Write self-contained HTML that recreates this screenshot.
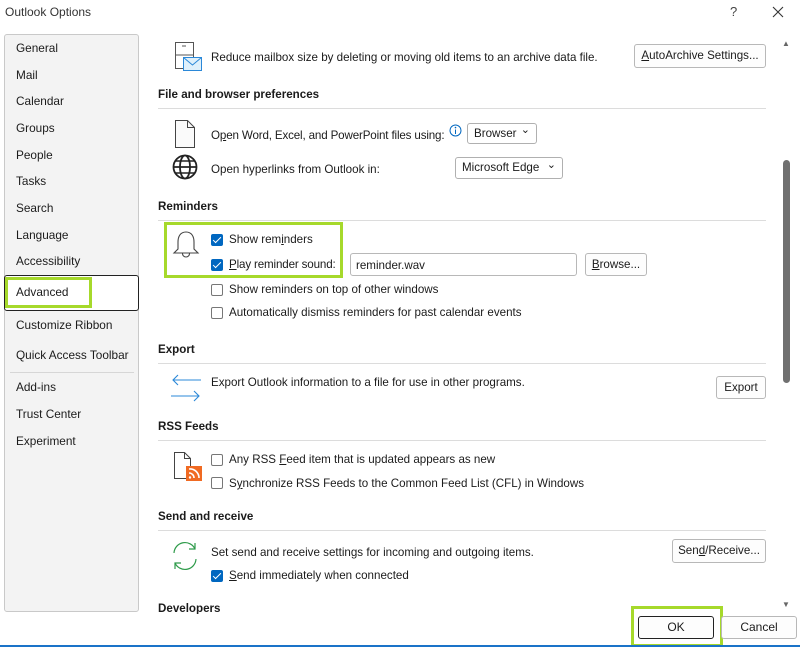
<!DOCTYPE html>
<html><head><meta charset="utf-8"><style>
*{margin:0;padding:0;box-sizing:border-box}
body{width:800px;height:647px;background:#fff;font-family:"Liberation Sans",sans-serif;font-size:11.6px;color:#1b1b1b;position:relative;overflow:hidden}
.a{position:absolute;white-space:nowrap}
div.a{margin-top:2px}
.h{font-weight:bold;font-size:11.6px}
.line{position:absolute;left:158px;width:608px;height:1px;background:#dcdcdc}
.nav{position:absolute;left:16px;font-size:11.8px}
.btn{position:absolute;border:1px solid #b8b8b8;border-radius:3px;background:#fdfdfd;text-align:center;font-size:11.6px}
.cb{position:absolute;width:12px;height:12px;border:1px solid #777;border-radius:2px;background:#fff;margin-top:2px}
.cb.on{background:#0067c0;border-color:#0067c0}
.cb.on::after{content:"";position:absolute;left:3px;top:0px;width:3px;height:7px;border:solid #fff;border-width:0 1.5px 1.5px 0;transform:rotate(45deg)}
.sel{position:absolute;border:1px solid #b0b0b0;border-radius:3px;background:#fff;font-size:11.6px;padding-left:6px}
.sel::after{content:"⌄";position:absolute;right:6px;top:-3px;font-size:11px}
.green{position:absolute;border:3px solid #a6d92b}
</style></head><body>
<div class="a" style="left:5px;top:5px;font-size:12px;color:#333;margin-top:0">Outlook Options</div>
<div class="a" style="left:730px;top:4px;font-size:13px;color:#444;margin-top:0">?</div>
<svg class="a" style="left:772px;top:6px" width="12" height="12" viewBox="0 0 12 12" stroke="#333" stroke-width="1.1"><path d="M1 1L11 11M11 1L1 11"/></svg>

<div style="position:absolute;left:4px;top:34px;width:135px;height:578px;background:#f3f3f3;border:1px solid #c9c9c9;border-radius:3px"></div>
<div class="nav" style="top:41px">General</div>
<div class="nav" style="top:68px">Mail</div>
<div class="nav" style="top:94px">Calendar</div>
<div class="nav" style="top:121px">Groups</div>
<div class="nav" style="top:148px">People</div>
<div class="nav" style="top:174px">Tasks</div>
<div class="nav" style="top:201px">Search</div>
<div class="nav" style="top:228px">Language</div>
<div class="nav" style="top:254px">Accessibility</div>
<div style="position:absolute;left:4px;top:275px;width:135px;height:36px;background:#fff;border:1.5px solid #222;border-radius:3px"></div>
<div class="green" style="left:5px;top:277px;width:87px;height:31px"></div>
<div class="nav" style="top:285px">Advanced</div>
<div class="nav" style="top:318px">Customize Ribbon</div>
<div class="nav" style="top:348px">Quick Access Toolbar</div>
<div style="position:absolute;left:10px;top:372px;width:124px;height:1px;background:#d6d6d6"></div>
<div class="nav" style="top:380px">Add-ins</div>
<div class="nav" style="top:407px">Trust Center</div>
<div class="nav" style="top:434px">Experiment</div>

<svg class="a" style="left:174px;top:41px" width="30" height="32" viewBox="0 0 30 32" fill="none" stroke="#555" stroke-width="1"><rect x="1.5" y="1.5" width="18" height="26"/><line x1="1.5" y1="14" x2="19.5" y2="14"/><line x1="8" y1="5" x2="12" y2="5"/><rect x="9.5" y="16.5" width="18" height="13" fill="#dff0fb" stroke="#2b88d8"/><polyline points="9.5,16.5 18.5,24 27.5,16.5" stroke="#2b88d8"/></svg>
<div class="a" style="left:211px;top:49px">Reduce mailbox size by deleting or moving old items to an archive data file.</div>
<div class="btn" style="left:634px;top:44px;width:132px;height:24px;line-height:22px"><u>A</u>utoArchive Settings...</div>

<div class="a h" style="left:158px;top:86px">File and browser preferences</div>
<div class="line" style="top:108px"></div>
<svg class="a" style="left:174px;top:119px" width="22" height="30" viewBox="0 0 22 30" fill="#fafafa" stroke="#444" stroke-width="1"><path d="M1.5 1.5H13.5L20.5 8.5V28.5H1.5Z"/><path d="M13.5 1.5V8.5H20.5" fill="none"/></svg>
<div class="a" style="left:211px;top:127px;letter-spacing:-0.15px">O<u>p</u>en Word, Excel, and PowerPoint files using:</div>
<svg class="a" style="left:449px;top:124px" width="13" height="13" viewBox="0 0 13 13"><circle cx="6.5" cy="6.5" r="5.5" fill="none" stroke="#0067c0"/><line x1="6.5" y1="5.5" x2="6.5" y2="10" stroke="#0067c0"/><circle cx="6.5" cy="3.6" r=".8" fill="#0067c0"/></svg>
<div class="sel" style="left:467px;top:123px;width:70px;height:21px;line-height:19px">Browser</div>
<svg class="a" style="left:172px;top:154px" width="26" height="26" viewBox="0 0 26 26" fill="none" stroke="#222" stroke-width="1.8"><circle cx="13" cy="13" r="11.5"/><ellipse cx="13" cy="13" rx="5" ry="11.5"/><line x1="1.5" y1="13" x2="24.5" y2="13"/><path d="M3.5 7H22.5M3.5 19H22.5" stroke-width="1.5"/></svg>
<div class="a" style="left:211px;top:161px">Open hyperlinks from Outlook in:</div>
<div class="sel" style="left:455px;top:157px;width:108px;height:22px;line-height:20px">Microsoft Edge</div>

<div class="a h" style="left:158px;top:198px">Reminders</div>
<div class="line" style="top:220px"></div>
<div class="green" style="left:164px;top:222px;width:179px;height:56px"></div>
<svg class="a" style="left:172px;top:230px" width="28" height="30" viewBox="0 0 28 30" fill="none" stroke="#444" stroke-width="1.1"><path d="M14 2C8 2 6 7 6 12V19L2 23H26L22 19V12C22 7 20 2 14 2Z"/><path d="M10.5 23.5A3.5 3.5 0 0 0 17.5 23.5"/></svg>
<div class="cb on" style="left:211px;top:232px"></div>
<div class="a" style="left:229px;top:231px">Show rem<u>i</u>nders</div>
<div class="cb on" style="left:211px;top:257px"></div>
<div class="a" style="left:229px;top:256px;letter-spacing:-0.15px"><u>P</u>lay reminder sound:</div>
<div style="position:absolute;left:350px;top:253px;width:227px;height:23px;border:1px solid #b8b8b8;border-radius:3px"></div>
<div class="a" style="left:356px;top:257px">reminder.wav</div>
<div class="btn" style="left:585px;top:253px;width:62px;height:23px;line-height:21px"><u>B</u>rowse...</div>
<div class="cb" style="left:211px;top:282px"></div>
<div class="a" style="left:229px;top:281px">Show reminders on top of other windows</div>
<div class="cb" style="left:211px;top:305px"></div>
<div class="a" style="left:229px;top:304px">Automatically dismiss reminders for past calendar events</div>

<div class="a h" style="left:158px;top:341px">Export</div>
<div class="line" style="top:363px"></div>
<svg class="a" style="left:170px;top:374px" width="32" height="28" viewBox="0 0 32 28" fill="none" stroke="#2b88d8" stroke-width="1.1"><path d="M31 6H3M8 1L3 6L8 11"/><path d="M1 22H29M24 17L29 22L24 27"/></svg>
<div class="a" style="left:211px;top:374px">Export Outlook information to a file for use in other programs.</div>
<div class="btn" style="left:716px;top:376px;width:50px;height:23px;line-height:21px">Export</div>

<div class="a h" style="left:158px;top:418px">RSS Feeds</div>
<div class="line" style="top:440px"></div>
<svg class="a" style="left:172px;top:451px" width="32" height="32" viewBox="0 0 32 32" fill="none" stroke="#444" stroke-width="1"><path d="M2.5 1.5H12.5L18.5 7.5V27.5H2.5Z"/><path d="M12.5 1.5V7.5H18.5"/><rect x="14" y="15" width="16" height="15" fill="#f06a22" stroke="none"/><path d="M17 18A9 9 0 0 1 27 27M17 22A5 5 0 0 1 22 27" stroke="#fff" stroke-width="1.6"/><circle cx="18" cy="26.5" r="1.2" fill="#fff" stroke="none"/></svg>
<div class="cb" style="left:211px;top:452px"></div>
<div class="a" style="left:229px;top:451px">Any RSS <u>F</u>eed item that is updated appears as new</div>
<div class="cb" style="left:211px;top:475px"></div>
<div class="a" style="left:229px;top:475px">S<u>y</u>nchronize RSS Feeds to the Common Feed List (CFL) in Windows</div>

<div class="a h" style="left:158px;top:508px">Send and receive</div>
<div class="line" style="top:530px"></div>
<svg class="a" style="left:169px;top:541px" width="32" height="30" viewBox="0 0 32 30" fill="none" stroke="#2e9b4a" stroke-width="1.2"><path d="M5 12A11 11 0 0 1 26 8M26 2V8H20"/><path d="M27 18A11 11 0 0 1 6 22M6 28V22H12"/></svg>
<div class="a" style="left:211px;top:544px">Set send and receive settings for incoming and outgoing items.</div>
<div class="btn" style="left:672px;top:539px;width:94px;height:24px;line-height:22px">Sen<u>d</u>/Receive...</div>
<div class="cb on" style="left:211px;top:568px"></div>
<div class="a" style="left:229px;top:567px"><u>S</u>end immediately when connected</div>
<div class="a h" style="left:158px;top:600px;height:12px;overflow:hidden">Developers</div>

<div class="a" style="left:782px;top:37px;font-size:8px;color:#666">▲</div>
<div style="position:absolute;left:783px;top:160px;width:7px;height:223px;background:#707070;border-radius:4px"></div>
<div class="a" style="left:782px;top:598px;font-size:8px;color:#666">▼</div>

<div class="green" style="left:631px;top:606px;width:92px;height:41px"></div>
<div class="btn" style="left:638px;top:616px;width:76px;height:23px;line-height:21px;border:1.5px solid #222;font-size:12px">OK</div>
<div class="btn" style="left:721px;top:616px;width:76px;height:23px;line-height:21px;font-size:12px">Cancel</div>
<div style="position:absolute;left:0;top:645px;width:800px;height:2px;background:#1a73c8"></div>
</body></html>
